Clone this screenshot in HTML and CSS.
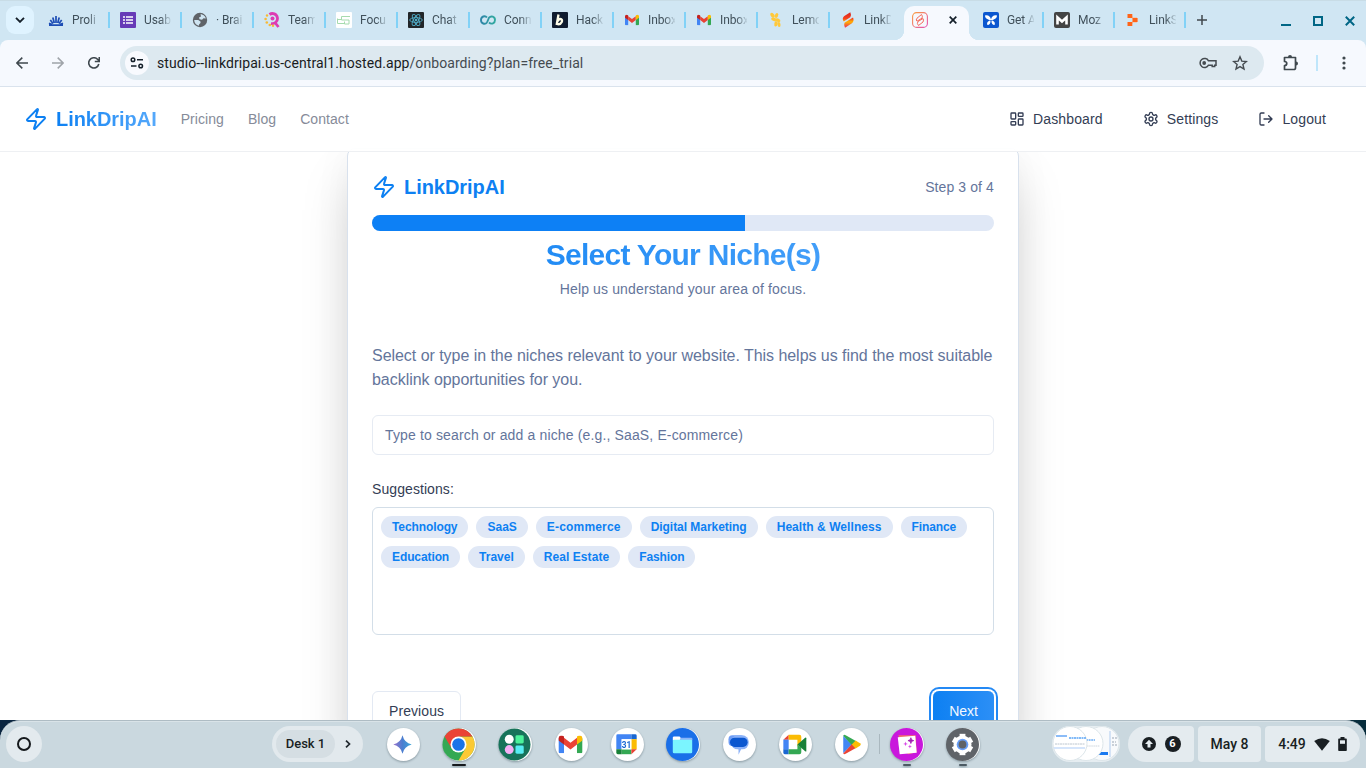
FILE: index.html
```html
<!DOCTYPE html>
<html lang="en">
<head>
<meta charset="utf-8">
<title>LinkDripAI</title>
<link rel="stylesheet" href="styles.css">
</head>
<body>
<svg class="defs" width="0" height="0">
  <defs>
    <symbol id="zap" viewBox="0 0 24 24"><path d="M4 14a1 1 0 0 1-.78-1.63l9.9-10.2a.5.5 0 0 1 .86.46l-1.92 6.02A1 1 0 0 0 13 10h7a1 1 0 0 1 .78 1.63l-9.9 10.2a.5.5 0 0 1-.86-.46l1.92-6.02A1 1 0 0 0 11 14z" fill="none" stroke="currentColor" stroke-width="2" stroke-linejoin="round"/></symbol>
    <symbol id="gmail" viewBox="0 0 24 18"><path d="M0 3v13.400Q0 18 1.600 18H5.500V8z" fill="#4285f4"/><path d="M24 3v13.400Q24 18 22.400 18H18.500V8z" fill="#34a853"/><path d="M5.500 2.400 12 7.300l6.500-4.900v6.800L12 14.100 5.500 9.200z" fill="#ea4335"/><path d="M0 3C0 .3 3-.9 5.500 1.200v8L0 5.100z" fill="#c5221f"/><path d="M24 3c0-2.700-3-3.900-5.500-1.800v8L24 5.100z" fill="#fbbc04"/></symbol>
    <linearGradient id="spark"><stop offset="0" stop-color="#9b72cb"/><stop offset=".5" stop-color="#4b7ed0"/><stop offset="1" stop-color="#3aa7d8"/></linearGradient>
    <linearGradient id="fire" x1="0" y1="0" x2="0" y2="1"><stop offset="0" stop-color="#d8241f"/><stop offset=".4" stop-color="#f5421f"/><stop offset=".62" stop-color="#ffb400"/><stop offset="1" stop-color="#ee2a5a"/></linearGradient>
    <linearGradient id="insta" x1="0" y1="0" x2="1" y2="1"><stop offset="0" stop-color="#fb9d3c"/><stop offset="1" stop-color="#e24fb4"/></linearGradient>
    <linearGradient id="loop"><stop offset="0" stop-color="#2f86a8"/><stop offset="1" stop-color="#31aaa0"/></linearGradient>
  </defs>
</svg>

<div class="screen">
  <div class="tabstrip">
    <button class="tab-search"><svg width="10" height="6" viewBox="0 0 10 6"><path d="M1 .8l4 4 4-4" fill="none" stroke="#15202a" stroke-width="1.900"/></svg></button>
    <div class="tab"><svg viewBox="0 0 16 16"><path d="M1 13.200h14M8 11V4M6.300 11 4.800 5.500M9.700 11l1.500-5.500M5 11.500 2.300 8M11 11.500 13.700 8M4 12.500l-3-1.200M12 12.500l3-1.200" stroke="#1d4db5" stroke-width="1.700"/></svg><span>Proli</span></div>
    <div class="tab"><svg viewBox="0 0 16 16"><rect width="16" height="16" rx="1" fill="#673ab7"/><path d="M6 5h7M6 8h7M6 11h7M3 5h2M3 8h2M3 11h2" stroke="#fff" stroke-width="1.700"/></svg><span>Usab</span></div>
    <div class="tab"><svg viewBox="0 0 16 16"><circle cx="8" cy="8" r="7.200" fill="#5f6368"/><path d="M8.500 2.200c3 0 5 2.300 5.300 4.300l-2.300-.3-1.500 1.600-2.500-.6L7 5.500l2-1zM2.200 8h4l2.300 1.500V11L7 12.500v1.300C4 13.300 2.200 11 2.200 8z" fill="#cfe5f2"/></svg><span>· Brai</span></div>
    <div class="tab"><svg viewBox="0 0 16 16"><path d="M5.500 2.500A5 5 0 1 1 7 11.300M10.500 10l4 5" fill="none" stroke="#dd3bb2" stroke-width="2.800"/><circle cx="8.500" cy="6.500" r="2" fill="#dd3bb2"/><g fill="#f8b936"><circle cx="3" cy="3.500" r="1.200"/><circle cx="1.600" cy="7" r="1.300"/><circle cx="2.800" cy="10.500" r="1.300"/><circle cx="5.800" cy="13" r="1.300"/><circle cx="9" cy="13.700" r="1.200"/></g></svg><span>Team</span></div>
    <div class="tab"><svg viewBox="0 0 16 16"><rect width="16" height="16" rx="1" fill="#fff"/><path d="M14 4.500H5.500V8H13v4H8.500V9.500M1.500 6.500v5h7M1.500 7.500h4" fill="none" stroke="#a6dbae"/></svg><span>Focu</span></div>
    <div class="tab"><svg viewBox="0 0 16 16"><rect width="16" height="16" rx="1" fill="#222629"/><g fill="none" stroke="#50adc8" stroke-width=".9"><ellipse cx="8" cy="8" rx="6.300" ry="2.400"/><ellipse cx="8" cy="8" rx="6.300" ry="2.400" transform="rotate(60 8 8)"/><ellipse cx="8" cy="8" rx="6.300" ry="2.400" transform="rotate(120 8 8)"/></g><circle cx="8" cy="8" r="1.300" fill="#50adc8"/></svg><span>Chat</span></div>
    <div class="tab"><svg viewBox="0 0 16 16"><path d="M7 10.500C5 13 1 11.500 1 8s4-5 6-2.500M9 10.500c2.500 2.300 6 .8 6-2.500s-3.800-4.700-6-2.300L7 10.500" fill="none" stroke="url(#loop)" stroke-width="1.900"/></svg><span>Conn</span></div>
    <div class="tab"><svg viewBox="0 0 16 16"><rect width="16" height="16" rx="1" fill="#101c2f"/><path d="M6.500 2.500 4.800 12c5 1.500 7-5 3.500-5-1.500 0-2.500 1.500-2.700 2.500" fill="none" stroke="#fffde8" stroke-width="2.300"/></svg><span>Hack</span></div>
    <div class="tab"><svg viewBox="0 0 16 16"><use href="#gmail" x="1" y="2.500" width="14" height="11"/></svg><span>Inbox</span></div>
    <div class="tab"><svg viewBox="0 0 16 16"><use href="#gmail" x="1" y="2.500" width="14" height="11"/></svg><span>Inbox</span></div>
    <div class="tab"><svg viewBox="0 0 16 16"><g fill="#ffc93b"><ellipse cx="4.500" cy="3.200" rx="1.800" ry="2.700" transform="rotate(-35 4.500 3.200)"/><ellipse cx="8.500" cy="3.500" rx="1.600" ry="2.500" transform="rotate(25 8.500 3.500)"/><ellipse cx="6" cy="7.300" rx="2.900" ry="1.700" transform="rotate(15 6 7.300)"/><ellipse cx="10" cy="8.200" rx="2.500" ry="1.700" transform="rotate(25 10 8.200)"/><ellipse cx="8" cy="11.800" rx="1.700" ry="2.700" transform="rotate(10 8 11.800)"/><ellipse cx="11" cy="12.500" rx="1.500" ry="2.500" transform="rotate(-10 11 12.500)"/></g></svg><span>Lemo</span></div>
    <div class="tab last"><svg viewBox="0 0 16 16"><path d="M10.300.3 4 4.300q-2.300 2.200-.3 5.200l6.600-4.200q1.500-2 0-5zM13 5.500 4.500 10.800Q3.500 13 5 15.700l7-4.500q2.500-2.500 1-5.700z" fill="url(#fire)"/></svg><span>LinkD</span></div>
    <div class="tab-active">
      <svg width="16" height="16" viewBox="0 0 16 16"><rect x=".6" y=".6" width="14.800" height="14.800" rx="4" fill="none" stroke="url(#insta)" stroke-width="1.100"/><path d="M9.500 2.500 5 6.200q-1.500 2 0 3l5-3q1-2-.5-3.700zM11 6.500 6 9.500q-1.500 2 .5 4L11 10q1-2 0-3.500z" fill="none" stroke="#f46a5b"/></svg>
      <svg width="8" height="8" viewBox="0 0 8 8"><path d="M.7.7l6.600 6.600M7.300.7L.7 7.300" stroke="#15202a" stroke-width="1.700"/></svg>
    </div>
    <div class="tab slim"><svg viewBox="0 0 16 16"><rect width="16" height="16" rx="2" fill="#0b57d0"/><path d="M8 8C5.500 8.200 2 6.500 2 3.500c3-1 5.500 1 6 4 .5-3 3-5 6-4C14 6.500 10.500 8.200 8 8zM7.500 8.500c.3 2.500-1 4.500-3 4.500-1.200-2 .5-4.500 3-4.500zM8.500 8.500c-.3 2.500 1 4.500 3 4.500 1.200-2-.5-4.500-3-4.500z" fill="#fff"/></svg><span>Get A</span></div>
    <div class="tab slim"><svg viewBox="0 0 16 16"><rect width="16" height="16" rx="2" fill="#444"/><path d="M3.500 12.500v-7l4.500 4 4.500-4v7" fill="none" stroke="#fff" stroke-width="2.600"/></svg><span>Moz</span></div>
    <div class="tab slim"><svg viewBox="0 0 16 16"><path d="M4 4h3v2h5v4H7v2H4" fill="none" stroke="#ffb48c"/><path d="M2.500 2h4.800v4H2.500zM7.500 6H12.500v4H7.500zM2.500 10h4.800v4H2.500z" fill="#ff6418"/></svg><span>LinkS</span></div>
    <svg class="plus" width="10" height="10" viewBox="0 0 10 10"><path d="M5 0v10M0 5h10" stroke="#40484d" stroke-width="1.500"/></svg>
    <div class="window-controls">
      <svg width="10" height="10" viewBox="0 0 10 10"><path d="M0 9h10" stroke="#006685" stroke-width="2"/></svg>
      <svg width="10" height="10" viewBox="0 0 10 10"><path d="M1 1h8v8H1z" fill="none" stroke="#006685" stroke-width="2"/></svg>
      <svg width="10" height="10" viewBox="0 0 10 10"><path d="M.8.8l8.400 8.400M9.200.8L.8 9.200" stroke="#006685" stroke-width="2"/></svg>
    </div>
  </div>

  <div class="toolbar">
    <svg class="nav-icon" viewBox="0 0 12 12"><path d="M12 6H1M6.300.6L.9 6l5.400 5.400" fill="none" stroke="#3f484e" stroke-width="1.500"/></svg>
    <svg class="nav-icon" viewBox="0 0 12 12"><path d="M0 6h11M5.700.6L11.100 6l-5.400 5.400" fill="none" stroke="#9fa4a9" stroke-width="1.500"/></svg>
    <svg class="nav-icon" viewBox="0 0 12 12"><path d="M10.800 7A5.100 5.100 0 1 1 9.500 2.300L11 3.800M11.300 0v4.500H6.800" fill="none" stroke="#3f484e" stroke-width="1.600"/></svg>
    <div class="omnibox">
      <div class="site-info"><svg width="14" height="12" viewBox="0 0 14 12"><g fill="none" stroke="#15202a" stroke-width="1.500"><circle cx="3" cy="2.700" r="1.800"/><path d="M7 2.700h6M1 9h5.500"/><circle cx="10.700" cy="9" r="1.800"/></g></svg></div>
      <div class="url">studio--linkdripai.us-central1.hosted.app<span>/onboarding?plan=free_trial</span></div>
      <svg class="key" width="18" height="12" viewBox="0 0 18 12"><g fill="none" stroke="#454b50" stroke-width="1.500"><path d="M9.500 3.800H17v4.400h-1.300v1.300h-2.500V8.200H9.500A4.500 4.500 0 1 1 9.500 3.800z"/></g><circle cx="5.200" cy="6" r="1.900" fill="#454b50"/></svg>
      <svg width="16" height="16" viewBox="0 0 16 16"><path d="M8 1.800l1.800 4.300 4.600.4-3.500 3 1.100 4.500L8 11.600 4 14l1.100-4.500-3.500-3 4.600-.4z" fill="none" stroke="#454b50" stroke-width="1.400"/></svg>
    </div>
    <svg class="puzzle" width="18" height="18" viewBox="0 0 18 18"><path d="M2.500 3.500h11V14a1.500 1.500 0 0 1-1.500 1.500H2.500v-4c3 0 3-4 0-4z" fill="none" stroke="#3f484e" stroke-width="1.700" stroke-linejoin="round"/><path d="M6 3a2 2 0 0 1 4 0zM14 7.500a2 2 0 0 1 0 4z" fill="#3f484e"/></svg>
    <i class="toolbar-sep"></i>
    <svg width="4" height="14" viewBox="0 0 4 14"><g fill="#3f484e"><circle cx="2" cy="2" r="1.600"/><circle cx="2" cy="7" r="1.600"/><circle cx="2" cy="12" r="1.600"/></g></svg>
  </div>

  <div class="viewport">
    <header class="site-header">
      <div class="brand"><svg width="24" height="24"><use href="#zap"/></svg><span class="brand-gradient">LinkDripAI</span></div>
      <nav class="links"><a>Pricing</a><a>Blog</a><a>Contact</a></nav>
      <nav class="actions">
        <a><svg viewBox="0 0 24 24"><rect x="3" y="3" width="7" height="9" rx="1"/><rect x="14" y="3" width="7" height="5" rx="1"/><rect x="14" y="12" width="7" height="9" rx="1"/><rect x="3" y="16" width="7" height="5" rx="1"/></svg><span>Dashboard</span></a>
        <a><svg viewBox="0 0 24 24"><path d="M12.220 2h-.44a2 2 0 0 0-2 2v.18a2 2 0 0 1-1 1.730l-.43.25a2 2 0 0 1-2 0l-.15-.08a2 2 0 0 0-2.730.73l-.22.38a2 2 0 0 0 .73 2.730l.15.1a2 2 0 0 1 1 1.720v.51a2 2 0 0 1-1 1.740l-.15.09a2 2 0 0 0-.73 2.730l.22.38a2 2 0 0 0 2.730.73l.15-.08a2 2 0 0 1 2 0l.43.25a2 2 0 0 1 1 1.730V20a2 2 0 0 0 2 2h.44a2 2 0 0 0 2-2v-.18a2 2 0 0 1 1-1.730l.43-.25a2 2 0 0 1 2 0l.15.08a2 2 0 0 0 2.730-.73l.22-.39a2 2 0 0 0-.73-2.730l-.15-.08a2 2 0 0 1-1-1.740v-.5a2 2 0 0 1 1-1.740l.15-.09a2 2 0 0 0 .73-2.730l-.22-.38a2 2 0 0 0-2.730-.73l-.15.08a2 2 0 0 1-2 0l-.43-.25a2 2 0 0 1-1-1.730V4a2 2 0 0 0-2-2z"/><circle cx="12" cy="12" r="3"/></svg><span>Settings</span></a>
        <a><svg viewBox="0 0 24 24"><path d="M9 21H5a2 2 0 0 1-2-2V5a2 2 0 0 1 2-2h4M16 17l5-5-5-5M21 12H9"/></svg><span>Logout</span></a>
      </nav>
    </header>
    <main class="card">
      <div class="card-top"><div class="brand"><svg width="24" height="24"><use href="#zap"/></svg><span>LinkDripAI</span></div><span class="step">Step 3 of 4</span></div>
      <div class="progress"><div class="bar"></div></div>
      <h1>Select Your Niche(s)</h1>
      <p class="sub">Help us understand your area of focus.</p>
      <p class="intro">Select or type in the niches relevant to your website. This helps us find the most suitable backlink opportunities for you.</p>
      <div class="field">Type to search or add a niche (e.g., SaaS, E-commerce)</div>
      <div class="label">Suggestions:</div>
      <div class="chips"><span class="tight">Technology</span><span>SaaS</span><span class="loose">E-commerce</span><span class="snug">Digital Marketing</span><span class="airy">Health &amp; Wellness</span><span class="tight">Finance</span><span class="tight">Education</span><span>Travel</span><span class="airy">Real Estate</span><span class="tight">Fashion</span></div>
      <div class="card-actions"><button class="btn prev">Previous</button><button class="btn next">Next</button></div>
    </main>
  </div>

  <div class="shelf-back">
  <div class="shelf">
    <div class="launcher"><i></i></div>
    <div class="desk"><b>Desk 1</b><svg width="6" height="8" viewBox="0 0 6 8"><path d="M1 .6L4.500 4 1 7.400" fill="none" stroke="#20282d" stroke-width="1.700"/></svg></div>
    <div class="apps">
      <div class="app"><svg viewBox="0 0 34 34"><path d="M17 7.500Q18.800 15.200 26.500 17 18.800 18.800 17 26.500 15.200 18.800 7.500 17 15.200 15.200 17 7.500z" fill="url(#spark)"/></svg></div>
      <div class="app open"><svg viewBox="0 0 34 34"><circle cx="17" cy="17" r="16.500" fill="#34a853"/><path d="M31.300 8.750A16.500 16.500 0 0 1 17 33.500L24.200 21.100 17 8.750z" fill="#fbc934"/><path d="M2.700 8.750A16.500 16.500 0 0 1 31.300 8.750H17L9.900 21z" fill="#ea4335"/><circle cx="17" cy="17" r="8.200" fill="#fff"/><circle cx="17" cy="17" r="6.500" fill="#1a73e8"/></svg></div>
      <div class="app"><svg viewBox="0 0 34 34"><circle cx="17" cy="17" r="16.500" fill="#17735a"/><circle cx="11.600" cy="11.600" r="4.600" fill="#fff"/><rect x="18" y="7.500" width="8.500" height="8.500" rx="1.500" fill="#4af29a"/><circle cx="11.600" cy="22.200" r="4.600" fill="#f4b0f5"/><rect x="18" y="18" width="8.500" height="8.500" rx="1.500" fill="#57edf2"/></svg></div>
      <div class="app"><svg viewBox="0 0 34 34"><use href="#gmail" x="4.500" y="7.600" width="25" height="18.500"/></svg></div>
      <div class="app"><svg viewBox="0 0 34 34"><path d="M6.500 8q0-1.500 1.500-1.500H22v5H12V22H6.500z" fill="#4285f4"/><path d="M22 6.500h4q1.500 0 1.500 1.500v3.500H22z" fill="#1967d2"/><path d="M22 11.500h5.500V22H22z" fill="#fbbc04"/><path d="M12 22h10v5H12z" fill="#34a853"/><path d="M6.500 22H12v5H8q-1.500 0-1.500-1.500z" fill="#188038"/><path d="M22 22h5.500L22 27z" fill="#ea4335"/><path d="M12 11.500h10V22H12z" fill="#fff"/><text x="17" y="20.200" text-anchor="middle" class="cal">31</text></svg></div>
      <div class="app"><svg viewBox="0 0 34 34"><circle cx="17" cy="17" r="17" fill="#1a6fe8"/><path d="M7 10q0-1.300 1.300-1.300H14l2 2.300v2H7z" fill="#fff"/><path d="M15 10h11q1.200 0 1.200 1.300V13H14z" fill="#8ab4f8"/><rect x="7" y="12" width="20" height="14" rx="1.300" fill="#7bf5ff"/></svg></div>
      <div class="app"><svg viewBox="0 0 34 34"><rect x="6.700" y="7.500" width="16" height="11" rx="4" fill="#6f9df5"/><rect x="9.500" y="7.500" width="18" height="14.500" rx="6.500" fill="#8cb2f8"/><path d="M11 19h10l-4 8.500V22z" fill="#8cb2f8"/><rect x="8.200" y="10" width="18.200" height="9.500" rx="4.700" fill="#0b57d0"/></svg></div>
      <div class="app"><svg viewBox="0 0 34 34"><path d="M5.500 12 11 7v5z" fill="#ea4335"/><path d="M11 7h11q2 0 2 2v6l-4 4v-7h-9z" fill="#fbbc04"/><path d="M5.500 12H11v10H5.500z" fill="#4285f4"/><path d="M5.500 22H11v5H7q-1.500 0-1.500-1.500z" fill="#1967d2"/><path d="M11 22h9v-5l4 3v5q0 2-2 2H11z" fill="#34a853"/><path d="M20 17 28 10q1.200-.6 1.200.6v13q0 1.200-1.200.4z" fill="#188038"/></svg></div>
      <div class="app"><svg viewBox="0 0 34 34"><path d="M9.500 8v18l9-9z" fill="#4285f4"/><path d="M9.500 8q.8-1.500 2.500-.6l11 6.300-4.500 4z" fill="#34a853"/><path d="M9.500 26.200q.8 1.300 2.500.4l11-6.200-4.500-4z" fill="#ea4335"/><path d="M22.300 13l4.500 2.600q1.700 1.300 0 2.700L22.300 21 18.300 17z" fill="#fbbc04"/></svg></div>
      <i class="app-sep"></i>
      <div class="app idle"><svg viewBox="0 0 34 34"><circle cx="17" cy="17" r="17" fill="#c917dc"/><path d="M8.500 7.500h18l1 17.500-9 2z" fill="#f36f68"/><path d="M8 9.500 26 8l1.500 17.500L10 27z" fill="#fff"/><path d="M21.500 10l.8 2.200 2.200.8-2.200.8-.8 2.200-.8-2.200-2.200-.8 2.200-.8z" stroke="#a321b3" stroke-width=".8" fill="#a321b3"/><path d="M16 14l.6 1.800 1.800.6-1.800.6-.6 1.800-.6-1.800-1.800-.6 1.800-.6zM20.500 17l.6 1.500 1.500.6-1.500.6-.6 1.500-.6-1.500-1.500-.6 1.500-.6z" fill="#d94ae8"/></svg></div>
      <div class="app idle"><svg viewBox="0 0 34 34"><circle cx="17" cy="17" r="17" fill="#5f6368"/><circle cx="17" cy="17" r="7.300" fill="none" stroke="#fff" stroke-width="4"/><g stroke="#fff" stroke-width="6"><path d="M17 6v22"/><path d="M17 6v22" transform="rotate(60 17 17)"/><path d="M17 6v22" transform="rotate(120 17 17)"/></g><circle cx="17" cy="17" r="6" fill="#669df6"/><circle cx="17" cy="17" r="4" fill="#5f6368"/></svg></div>
    </div>
    <div class="tote"><svg width="68" height="36" viewBox="0 0 68 36"><g stroke="#dce5e9"><circle cx="50" cy="17.500" r="17" fill="#f8fafc"/><path d="M46 26h10v3H46z" fill="#1a7af0" stroke="none"/><path d="M58 5v26" stroke="#d4e3f6" stroke-width="2"/><path d="M60 12h6M60 16h4M60 19h6" stroke="#9aa6b5" stroke-dasharray="2 1"/><circle cx="34" cy="17.500" r="17" fill="#fff"/><path d="M34 14h9" stroke="#6cadf5" stroke-width="1.500" stroke-dasharray="2 .6"/><path d="M33 20h15" stroke="#cfd6dd" stroke-dasharray="1.500 .6"/><circle cx="18" cy="17.500" r="17" fill="#fff"/></g><path d="M4 10h11" stroke="#1a7af0" stroke-width="1.200"/><path d="M17 12h17" stroke="#5aa5f6" stroke-width="1.500" stroke-dasharray="2 .5"/><path d="M3 18h30" stroke="#bcc6d0" stroke-dasharray="2 .5"/><path d="M2 22h31" stroke="#d5e5fb" stroke-width="2"/></svg></div>
    <div class="status status-left">
      <svg width="14" height="14" viewBox="0 0 14 14"><circle cx="7" cy="7" r="7" fill="#191f23"/><path d="M7 2.700 11 7H8.500v3.500h-3V7H3z" fill="#e6edf1"/></svg>
      <b class="count">6</b>
    </div>
    <div class="status date">May 8</div>
    <div class="status status-right">4:49
      <svg class="wifi" width="16" height="13" viewBox="0 0 16 13"><path d="M8 12.800.2 3Q8-2.500 15.800 3z" fill="#191f23"/></svg>
      <svg width="9" height="14" viewBox="0 0 9 14"><path d="M2.500 0h4v1.500H8q.8 0 .8.800v11q0 .7-.8.700H1q-.8 0-.8-.7v-11q0-.8.8-.8h1.500z" fill="#191f23"/><path d="M2 3.300h5v3.500H2z" fill="#e6edf1"/></svg>
    </div>
  </div>
  </div>
</div>
</body>
</html>
```

FILE: styles.css
```css
* { box-sizing: border-box; }
body { margin: 0; font-family: "Liberation Sans", Arial, sans-serif; }
h1, p { margin: 0; }
button { font: inherit; border: 0; }
svg { display: block; flex: none; }
.defs { position: absolute; }
.screen { width: 1366px; height: 768px; display: flex; flex-direction: column; overflow: hidden; background: #d0e6f3; }

/* tab strip */
.tabstrip { flex: none; height: 40px; display: flex; align-items: center; background: #d0e6f3; box-shadow: inset 0 1px #c8dce6; font: 12px Roboto, sans-serif; color: #40505a; }
.tab-search { width: 28px; height: 28px; margin: 0 4px 0 6px; padding: 0; border-radius: 9px; background: #dff3ff; display: flex; align-items: center; justify-content: center; }
.tab { flex: none; width: 72px; height: 16px; padding-left: 10px; display: flex; align-items: center; gap: 8px; border-right: 2px solid #82d2f7; }
.tab svg { width: 16px; height: 16px; }
.tab span { width: 27px; overflow: hidden; white-space: nowrap; letter-spacing: -.1px; mask-image: linear-gradient(90deg, #000 60%, rgba(0, 0, 0, .1)); }
.tab.last { border-color: transparent; width: 74px; }
.tab.slim { width: 71px; }
.tab-active { flex: none; position: relative; align-self: flex-end; width: 65px; height: 34px; margin-right: 4px; padding: 0 12px 6px 8px; border-radius: 10px 10px 0 0; background: #f6f9fe; display: flex; align-items: center; justify-content: space-between; }
.tab-active::before, .tab-active::after { content: ""; position: absolute; bottom: 0; width: 10px; height: 10px; }
.tab-active::before { right: 100%; background: radial-gradient(circle at 0 0, transparent 10px, #f6f9fe 10.500px); }
.tab-active::after { left: 100%; background: radial-gradient(circle at 100% 0, transparent 10px, #f6f9fe 10.500px); }
.plus { margin-left: 11px; }
.window-controls { margin: 2px 11px 0 auto; display: flex; gap: 22px; }

/* toolbar */
.toolbar { flex: none; height: 47px; display: flex; align-items: center; padding: 0 20px 1px 16px; background: #f6f9fe; border-bottom: 1px solid #dae3ed; border-radius: 8px 8px 0 0; }
.nav-icon { width: 12px; height: 12px; margin-right: 24px; }
.toolbar .nav-icon:nth-child(3) { margin-right: 20px; }
.omnibox { flex: none; width: 1144px; height: 34px; border-radius: 17px; background: #dde9f0; display: flex; align-items: center; padding: 0 16px 0 5px; }
.site-info { width: 24px; height: 24px; border-radius: 50%; background: #f8fafe; display: flex; align-items: center; justify-content: center; }
.url { margin-left: 8px; flex: 1; font: 14px Roboto, sans-serif; letter-spacing: .075px; color: #191c1e; }
.url span { color: #454b50; }
.key { margin-right: 15px; }
.puzzle { margin-left: 18px; }
.toolbar-sep { flex: none; width: 2px; height: 16px; margin: 0 24px 0 16px; background: #bfe6fb; }

/* page */
.viewport { flex: 1; min-height: 0; overflow: hidden; background: #fff; display: flex; flex-direction: column; align-items: center; }
.site-header { position: relative; z-index: 1; flex: none; width: 100%; height: 65px; padding: 0 24px; display: flex; align-items: center; border-bottom: 1px solid #eef0f3; background: rgba(255, 255, 255, .95); font-size: 14px; }
.brand { display: flex; align-items: center; gap: 8px; color: #0d80f2; font-size: 20px; font-weight: 700; line-height: 28px; letter-spacing: -.04px; }
.brand-gradient { color: transparent; background: linear-gradient(90deg, #0d80f2, #56a9fb); background-clip: text; }
.links { display: flex; gap: 24px; margin-left: 24px; color: #868b99; letter-spacing: .06px; }
.actions { display: flex; gap: 8px; margin-left: auto; color: #333d54; }
.actions a { display: flex; align-items: center; gap: 8px; padding: 0 16px; }
.actions span { letter-spacing: .13px; }
.actions svg { width: 16px; height: 16px; fill: none; stroke: currentColor; stroke-width: 2; stroke-linecap: round; stroke-linejoin: round; }
.card { flex: none; width: 672px; height: 610px; margin-top: -4px; padding: 24px; border: 1px solid #d8e1ed; border-radius: 8px; background: #fff; box-shadow: 0 25px 50px -12px rgba(0, 0, 0, .25), 0 0 40px rgba(0, 0, 0, .04); color: #64759b; }
.card-top { display: flex; align-items: center; justify-content: space-between; height: 28px; }
.step { font-size: 14px; letter-spacing: .1px; }
.progress { height: 16px; margin-top: 14px; border-radius: 8px; background: #e0e8f6; overflow: hidden; }
.bar { width: 60%; height: 100%; background: #0d80f5; }
h1 { margin-top: 6px; font-size: 30px; line-height: 36px; letter-spacing: -.72px; text-align: center; color: transparent; background: linear-gradient(90deg, #0d80f2, #56a9fb); background-clip: text; }
.sub { margin-top: 6px; font-size: 14px; line-height: 20px; letter-spacing: .14px; text-align: center; }
.intro { margin-top: 45px; font-size: 16px; line-height: 24px; letter-spacing: -.04px; }
.field { height: 40px; margin-top: 23px; padding: 0 12px; border: 1px solid #e6ebf3; border-radius: 6px; font-size: 14px; line-height: 38px; letter-spacing: .145px; }
.label { margin-top: 24px; font-size: 14px; line-height: 20px; letter-spacing: .08px; color: #333d54; }
.chips { height: 128px; margin-top: 8px; padding: 8px; border: 1px solid #d3dee8; border-radius: 6px; display: flex; flex-wrap: wrap; align-content: flex-start; gap: 8px; }
.chips span { padding: 3px 11px; border-radius: 11px; background: #e0e8f6; color: #0d80f2; font-size: 12px; font-weight: 700; line-height: 16px; }
.chips .tight { letter-spacing: -.1px; }
.chips .snug { letter-spacing: -.04px; }
.chips .airy { letter-spacing: .06px; }
.chips .loose { letter-spacing: .18px; }
.card-actions { margin-top: 56px; display: flex; justify-content: space-between; }
.btn { height: 40px; padding: 0 16px; border-radius: 6px; font-size: 14px; }
.prev { border: 1px solid #e3e9f3; background: #fff; color: #333d54; letter-spacing: .08px; }
.next { background: linear-gradient(90deg, #0d80f2, #2c8ff6); color: #f2f8ff; box-shadow: 0 0 0 2px #fff, 0 0 0 4px #2489f4; }

/* shelf */
.shelf-back { flex: none; height: 48px; background: linear-gradient(90deg, #0a2540 0, #0d3144 50%, #062c3c 100%); }
.shelf { height: 48px; padding: 0 6px 1px; display: flex; align-items: center; border-top: 1px solid #aebcc4; border-radius: 20px 20px 0 0; background: #cad8df; box-shadow: inset 0 1px #d9e3e8; font: 500 14px Roboto, sans-serif; color: #191f23; }
.launcher { width: 36px; height: 36px; border-radius: 50%; background: #e3eaee; display: flex; align-items: center; justify-content: center; }
.launcher i { width: 14px; height: 14px; border: 2px solid #15191c; border-radius: 50%; }
.desk { width: 91px; height: 36px; margin-left: 230px; padding: 0 12px 0 4px; border-radius: 18px; background: #e2e9ed; display: flex; align-items: center; justify-content: space-between; }
.desk b { width: 59px; height: 28px; line-height: 28px; border-radius: 14px; background: #d5dee3; text-align: center; font-size: 13px; font-weight: 500; }
.apps { display: flex; align-items: center; gap: 22px; margin-left: 22.500px; }
.app { position: relative; width: 34px; height: 34px; border-radius: 50%; background: #fff; background-clip: content-box; padding: .5px; filter: drop-shadow(0 1px 1px rgba(40, 60, 70, .4)); }
.app svg { width: 33px; height: 33px; }
.cal { font: 700 8.500px Roboto, sans-serif; fill: #1967d2; }
.open::after, .idle::after { content: ""; position: absolute; top: 37px; left: 50%; transform: translateX(-50%); height: 2px; border-radius: 1px; background: #15191c; width: 14px; }
.idle::after { width: 8px; background: #4c5a63; }
.app-sep { width: 1px; height: 20px; margin: 0 -12px 0 -11px; background: #aab8bf; }
.tote { margin-left: auto; width: 68px; height: 36px; border-radius: 18px; overflow: hidden; background: #e6edf1; }
.status { height: 36px; margin-left: 4px; border-radius: 4px; background: #e4ebef; display: flex; align-items: center; justify-content: center; }
.status-left { width: 66px; margin-left: 8px; gap: 9px; border-radius: 18px 4px 4px 18px; }
.count { width: 16px; height: 16px; border-radius: 50%; background: #191f23; color: #fff; font-size: 11px; line-height: 16px; text-align: center; }
.date { width: 63px; }
.status-right { width: 95px; gap: 8px; border-radius: 4px 18px 18px 4px; }
```
